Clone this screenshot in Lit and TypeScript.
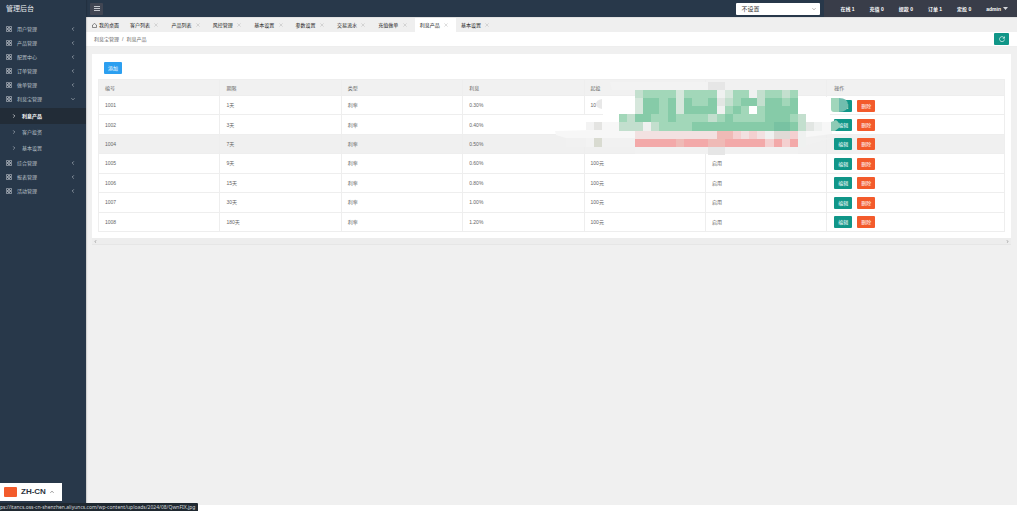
import { LitElement, html, svg, css } from "lit";
import { customElement, state } from "lit/decorators.js";
import { classMap } from "lit/directives/class-map.js";

const MENU_TOP = ["用户管理", "产品管理", "配置中心", "订单管理", "做单管理", "利息宝管理"];
const SUBMENU = ["利息产品", "客户投资", "基本设置"];
const MENU_BOTTOM = ["综合管理", "报表管理", "活动管理"];
const TABS = ["客户列表", "产品列表", "风控管理", "基本设置", "参数设置", "交易流水", "充值做单", "利息产品", "基本设置"];
const COUNTERS = ["在线 1", "充值 0", "提款 0", "订单 1", "定投 0"];
const COLUMNS = ["编号", "期限", "类型", "利息", "起投", "", "操作"];
const ROWS = [
  ["1001", "1天", "利率", "0.30%", "10", ""],
  ["1002", "3天", "利率", "0.40%", "", ""],
  ["1004", "7天", "利率", "0.50%", "", ""],
  ["1005", "9天", "利率", "0.60%", "100元", "启用"],
  ["1006", "15天", "利率", "0.80%", "100元", "启用"],
  ["1007", "30天", "利率", "1.00%", "100元", "启用"],
  ["1008", "180天", "利率", "1.20%", "100元", "启用"],
];

/* Mosaic tiles: one letter per tile, left edge at tile -2 of the green block. */
const TILE_COLORS: Record<string, string> = {
  g: "#86cba8", m: "#a2d7b9", l: "#c3dfce", p: "#d6e7dc", w: "#eff1f0", W: "#ffffff",
  t: "#78c2a2", e: "#e2e6e3", k: "#f2e1e1", r: "#f3a9a9", s: "#efbab6",
  q: "#f4d0d0", y: "#e0dad6", h: "#e6e6e6",
};
const TILES = [
  "...........hh............",
  "..lmmmmpmmmmwpmmwlmmlm...",
  "..pggmgpgmmgelmgglggmg...",
  "..pggmgpggggwmgmWmgggg...",
  "mlggmmgmmmmlmgmmmmgggml..",
  "lllwlmmmmggggggggggttglew",
  "..kkkkkkkkkkssqkqkwyyqw..",
  "..rrrrrsrrrssrrrrrqrqrw..",
  "...........hh............",
];
const TILE = 8.15;

const moduleIcon = html`<svg class="module" viewBox="0 0 12 12" aria-hidden="true">
  <path d="M1 1h4v4H1zM7 1h4v4H7zM1 7h4v4H1zM7 7h4v4H7zM5 3h2M5 9h2M3 5v2M9 5v2" />
</svg>`;

const chevron = (d: string) =>
  html`<svg class="chev" viewBox="0 0 10 10" aria-hidden="true"><path d=${d} /></svg>`;
const LEFT = "M7 1L3 5L7 9";
const DOWN = "M1 3L5 7L9 3";
const RIGHT = "M3 1L7 5L3 9";
const UP = "M1 7L5 3L9 7";

@customElement("app-root")
export class AppRoot extends LitElement {
  @state() private activeTab = 7;

  static styles = css`
    :host {
      display: block;
      box-sizing: border-box;
      height: 100vh;
      padding: 0 7px 6px 0;
      background: #fff;
      overflow: hidden;
      color: #666;
      font: 5px/8px "Liberation Sans", "Noto Sans CJK SC", sans-serif;
    }
    * { box-sizing: border-box; }
    button, select { font: inherit; color: inherit; border: 0; margin: 0; padding: 0; background: none; }
    a { color: inherit; text-decoration: none; }
    ul { list-style: none; margin: 0; padding: 0; }
    svg { display: block; fill: none; stroke: currentColor; }
    .layout { display: grid; grid-template-columns: 86px 1fr; height: 100%; }

    .side { background: #28384a; color: #b9c0c8; box-shadow: 1px 0 1px #0002; z-index: 1; }
    .logo { margin: 0; padding: 0 6px; height: 22px; font-size: 7px; line-height: 17px; font-weight: 400; color: #e6e9ec; }
    .item { display: flex; align-items: center; gap: 5px; height: 14px; padding: 0 11px 0 6px; }
    .item .label { flex: 1; }
    .module { width: 6px; height: 6px; stroke-width: 1.3; }
    .chev { width: 4px; height: 4px; stroke-width: 1.6; }
    .sub { margin-top: 2px; }
    .sub .item { height: 16px; padding-left: 12px; gap: 6px; }
    .sub .item.on { background: #222c37; color: #fff; font-weight: 700; }

    .main { display: flex; flex-direction: column; min-width: 0; background: #f0f0f0; }
    .top { display: flex; align-items: center; height: 17px; background: #28384a; color: #fff; }
    .burger { width: 13px; height: 12px; margin-left: 4px; background: #414653; color: #c4c7cd; border-radius: 1px; display: grid; place-items: center; }
    .burger svg { width: 6px; height: 5px; }
    .pickwrap { margin-left: auto; display: grid; align-items: center; }
    .pickwrap > * { grid-area: 1 / 1; }
    .pick { appearance: none; width: 84px; height: 12px; padding: 0 5px; background: #fff; color: #333; font-size: 6px; line-height: 12px; border-radius: 1px; }
    .pickwrap .chev { justify-self: end; margin-right: 4px; color: #888; pointer-events: none; }
    .stats { display: flex; align-items: center; justify-content: space-between; gap: 15px; height: 17px; margin-left: 4px; padding: 0 9px 0 16px; background: #393d49; white-space: nowrap; }
    .stats a { font-weight: 700; }
    .user { display: flex; align-items: center; gap: 2px; }
    .caret { width: 5px; height: 3px; background: #d5d7db; clip-path: polygon(0 0, 100% 0, 50% 100%); }

    .tabs { display: flex; height: 15px; background: #efefef; border-top: 1px solid #e2e2e2; color: #222; white-space: nowrap; }
    .home { display: flex; align-items: center; gap: 2px; width: 39px; padding-left: 6px; }
    .home svg { width: 5px; height: 5px; }
    .strip { display: flex; flex: 0 0 40%; }
    .tab { display: flex; flex: 1; align-items: center; justify-content: space-between; padding: 0 8px 0 5px; }
    .tab.on { background: #fff; }
    .tab svg { width: 4px; height: 4px; color: #aaa; }

    .crumbs { display: flex; align-items: center; height: 15px; padding: 0 8px; background: #fff; border-bottom: 1px solid #eee; }
    .crumbs span { padding: 0 3px; }
    .refresh { display: grid; place-items: center; width: 15px; height: 12px; margin-left: auto; background: #109688; color: #fff; border-radius: 1px; }
    .refresh svg { width: 6px; height: 6px; }

    .card { position: relative; margin: 7px 6px 0; padding: 8px 6px 6px; background: #fff; }
    .btn { display: inline-block; width: 18px; height: 12px; line-height: 12px; color: #fff; text-align: center; border-radius: 1px; background: #109688; vertical-align: middle; }
    .btn.add { display: block; margin: 0 0 5px 6px; background: #2c9ff0; }
    .btn.del { margin-left: 5px; background: #f35b2c; }
    .grid { width: 100%; height: 153px; table-layout: fixed; border-collapse: collapse; }
    .grid th, .grid td { width: 13.4%; padding: 0 6px; text-align: left; font-weight: 400; border: 1px solid #eee; line-height: 12px; }
    .grid th { height: 16px; background: #f1f1f1; }
    .grid th:last-child { width: auto; }
    .grid th:last-child, .grid td:last-child { padding-left: 7px; }
    .grid .hover td { background: #f0f0f0; }
    .hbar { display: flex; justify-content: space-between; align-items: center; height: 7px; margin: 0 6px; padding: 0 2px; background: #ededed; border-bottom: 1px solid #e6e6e6; color: #777; }
    .hbar .chev { width: 3px; height: 3px; stroke-width: 2; }

    .smudge { position: absolute; left: 458px; top: 24px; width: 310px; height: 84px; stroke: none; pointer-events: none; }
    .lang { position: fixed; left: 0; bottom: 10px; z-index: 2; display: flex; align-items: center; gap: 4px; width: 62px; height: 18px; padding-left: 4px; background: #fff; color: #2c3440; font-size: 8px; font-weight: 700; white-space: nowrap; }
    .flag { width: 13px; height: 10px; background: #f35b2c; border-radius: 1px; }
    .lang .chev { color: #555; }
    .status { position: fixed; left: 0; bottom: 0; z-index: 3; min-width: 198px; height: 8px; padding-right: 3px; background: #1f2830; color: #d3d7da; font: 5px/8px "Noto Sans", sans-serif; white-space: nowrap; border-top-right-radius: 1px; }
  `;

  private menuItem(label: string, open = false) {
    return html`<li><a class="item" href="#">${moduleIcon}<span class="label">${label}</span>
      ${chevron(open ? DOWN : LEFT)}</a></li>`;
  }

  private smudge() {
    return html`<svg class="smudge" viewBox="550 78 310 84" aria-hidden="true">
      <path fill="#fff" d="M612 97H830V118L826 134H570V115H603V110Q596 108 598 102Q600 98 606 98z" />
      <path fill="#e8e8e8" d="M602 99v10q-6-1-6-5t6-5z" />
      <path fill="#f7f7f7" d="M555 131L556 135L566 138H800L832 134V122H594V130z" />
      <path fill="#f1f1f1" d="M566 138H832L800 147H566z" />
      <path fill="#f3f3f3" d="M610 82H708V90H612zM586 122h8v8h-8zM586 138h8v9h-8z" />
      <path fill="#e4e4e2" d="M594 122h8v8h-8z" />
      <path fill="#d9dbd1" d="M594 138h8v9h-8z" />
      <path fill="#f1f1f1" d="M602 138h33v9h-33zM635 147h163v7h-163z" />
      <g shape-rendering="crispEdges">
        ${TILES.map((line, r) =>
          [...line].map((c, i) => c === "." ? null : svg`<rect
            x=${618.7 + i * TILE} y=${81.6 + r * TILE} width=${TILE} height=${TILE} fill=${TILE_COLORS[c]} />`))}
      </g>
      <path fill="#a0d6bb" d="M831 98h8v14h-5q-3 0-3-3z" />
      <path fill="#70bdae" d="M839 98q9 0 9 7t-9 7z" />
      <path fill="#8ecab5" d="M831 122l5-2q4 3 4 7l-5 4h-4z" />
    </svg>`;
  }

  render() {
    return html`
      <div class="layout">
        <nav class="side">
          <h1 class="logo">管理后台</h1>
          <ul>${MENU_TOP.map((m, i) => this.menuItem(m, i === MENU_TOP.length - 1))}</ul>
          <ul class="sub">
            ${SUBMENU.map((m, i) => html`<li><a class=${classMap({ item: true, on: i === 0 })} href="#">
              ${chevron(RIGHT)}<span class="label">${m}</span></a></li>`)}
          </ul>
          <ul>${MENU_BOTTOM.map((m) => this.menuItem(m))}</ul>
        </nav>
        <div class="main">
          <header class="top">
            <button class="burger" aria-label="菜单"><svg viewBox="0 0 12 10" stroke-width="2"><path d="M0 1h12M0 5h12M0 9h12" /></svg></button>
            <div class="pickwrap">
              <select class="pick" aria-label="设置"><option>不设置</option></select>
              ${chevron(DOWN)}
            </div>
            <div class="stats">
              ${COUNTERS.map((c) => html`<a href="#">${c}</a>`)}
              <a class="user" href="#">admin <span class="caret"></span></a>
            </div>
          </header>
          <div class="tabs">
            <a class="home" href="#"><svg viewBox="0 0 10 10"><path d="M1 4L5 1L9 4V9H1z" /></svg>我的桌面</a>
            <div class="strip">
              ${TABS.map((t, i) => html`<a class=${classMap({ tab: true, on: i === this.activeTab })} href="#"
                @click=${() => (this.activeTab = i)}>${t}<svg viewBox="0 0 10 10"><path d="M1 1L9 9M9 1L1 9" /></svg></a>`)}
            </div>
          </div>
          <div class="crumbs">
            <a href="#">利息宝管理</a><span>/</span><a href="#">利息产品</a>
            <button class="refresh" aria-label="刷新"><svg viewBox="0 0 12 12" stroke-width="1.3"><path d="M10.5 4A5 5 0 1 0 11 7M11 1V4.500H7.500" /></svg></button>
          </div>
          <section class="card">
            <button class="btn add">添加</button>
            <table class="grid">
              <thead><tr>${COLUMNS.map((c) => html`<th scope="col">${c}</th>`)}</tr></thead>
              <tbody>
                ${ROWS.map((row, i) => html`<tr class=${classMap({ hover: i === 2 })}>
                  ${row.map((v) => html`<td>${v}</td>`)}
                  <td><button class="btn">编辑</button><button class="btn del">删除</button></td>
                </tr>`)}
              </tbody>
            </table>
            ${this.smudge()}
          </section>
          <div class="hbar">${chevron(LEFT)}${chevron(RIGHT)}</div>
        </div>
      </div>
      <button class="lang"><span class="flag"></span>ZH-CN ${chevron(UP)}</button>
      <div class="status">ps://itancs.oss-cn-shenzhen.aliyuncs.com/wp-content/uploads/2024/08/QwnFIX.jpg</div>
    `;
  }
}
